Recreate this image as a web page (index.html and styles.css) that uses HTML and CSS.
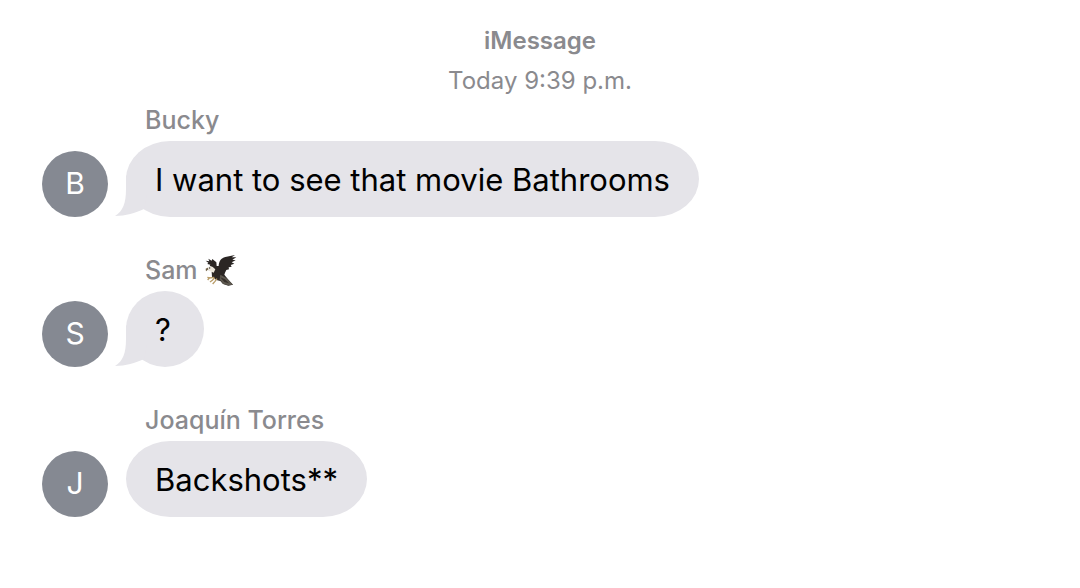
FILE: index.html
```html
<!DOCTYPE html>
<html lang="en">
<head>
    <meta charset="UTF-8">
    <meta name="viewport" content="width=device-width, initial-scale=1.0">
    <title>iMessage</title>
    <link rel="stylesheet" href="styles.css">
</head>
<body>
    <main class="chat">
        <header class="chat-header">
            <h1 class="service">iMessage</h1>
            <p class="timestamp">Today 9:39 p.m.</p>
        </header>

        <section class="message">
            <div class="avatar">B</div>
            <div class="content">
                <h2 class="sender">Bucky</h2>
                <p class="bubble">
                    <svg class="tail" viewBox="0 0 32 42" aria-hidden="true">
                        <path d="M11 0V14C11 28 8 36 0 41C11 41 20 38 29 34L32 20Z" />
                    </svg>
                    I want to see that movie Bathrooms
                </p>
            </div>
        </section>

        <section class="message">
            <div class="avatar">S</div>
            <div class="content">
                <h2 class="sender">
                    Sam
                    <svg class="eagle" viewBox="0 0 96 96" aria-hidden="true">
                        <path fill="#2b2624" d="M2 20L13 22L10 14L20 20L22 15L34 25L35 36L41 36C42 21 48 13 61 9L90 3L80 10L94 10L82 17L92 19L80 25L88 29L77 33L80 38L71 40L72 46L64 48L60 56L58 62L69 76L84 92L70 95L54 90L46 81L34 78L21 68L20 54L26 42L14 36L16 32L7 30L10 26Z" />
                        <path fill="#5d584f" d="M46 62L64 72L84 92L69 94L54 89L44 76Z" />
                        <path fill="#36302b" d="M46 70L60 76L72 88L58 84Z" />
                        <path fill="#ece7dc" d="M5 42Q12 35 22 38L31 46L26 56L16 52L8 49Z" />
                        <path fill="#6b5c40" d="M8 41L2 44L3 52L10 46Z" />
                        <circle fill="#2b2624" cx="14" cy="42" r="2" />
                        <path fill="none" stroke="#b89c68" stroke-width="4" d="M28 70L13 72L8 78M29 72L22 79L15 84M36 74L30 82L23 90M16 72L7 70" />
                    </svg>
                </h2>
                <p class="bubble bubble-short">
                    <svg class="tail" viewBox="0 0 32 42" aria-hidden="true">
                        <path d="M11 0V14C11 28 8 36 0 41C11 41 20 38 29 34L32 20Z" />
                    </svg>
                    ?
                </p>
            </div>
        </section>

        <section class="message">
            <div class="avatar">J</div>
            <div class="content">
                <h2 class="sender">Joaquín Torres</h2>
                <p class="bubble">Backshots**</p>
            </div>
        </section>
    </main>
</body>
</html>
```
FILE: styles.css
```css
* {
    margin: 0;
    padding: 0;
    box-sizing: border-box;
}

body {
    background-color: #ffffff;
    color: #000000;
    font-family: Inter, "Liberation Sans", sans-serif;
}

.chat {
    padding: 21px 42px;
}

.chat-header {
    margin-bottom: 3px;
    text-align: center;
    color: #8a8a8e;
}

.service,
.timestamp {
    font-size: 24px;
    line-height: 40px;
    font-weight: 400;
}

.service {
    font-weight: 600;
}

.message {
    display: flex;
    align-items: flex-end;
    gap: 18px;
    margin-bottom: 37px;
}

.avatar {
    flex: none;
    width: 66px;
    height: 66px;
    border-radius: 50%;
    background-color: #858992;
    color: #ffffff;
    font-size: 30px;
    line-height: 64px;
    text-align: center;
}

.content {
    display: flex;
    flex-direction: column;
    align-items: flex-start;
    gap: 5px;
}

.sender {
    display: flex;
    align-items: center;
    gap: 7px;
    padding-left: 19px;
    color: #8a8a8e;
    font-size: 25px;
    font-weight: 500;
    line-height: 32px;
}

.eagle {
    width: 32px;
    height: 32px;
}

.bubble {
    position: relative;
    min-width: 78px;
    padding: 19px 29px 17px;
    border-radius: 44px / 38px;
    background-color: #e5e4e9;
    font-size: 31px;
    line-height: 40px;
}

.bubble-short {
    border-radius: 50%;
}

/* hangs off the lower left corner of the bubble */
.tail {
    position: absolute;
    left: -11px;
    bottom: 0;
    width: 32px;
    height: 42px;
    fill: #e5e4e9;
}
```
